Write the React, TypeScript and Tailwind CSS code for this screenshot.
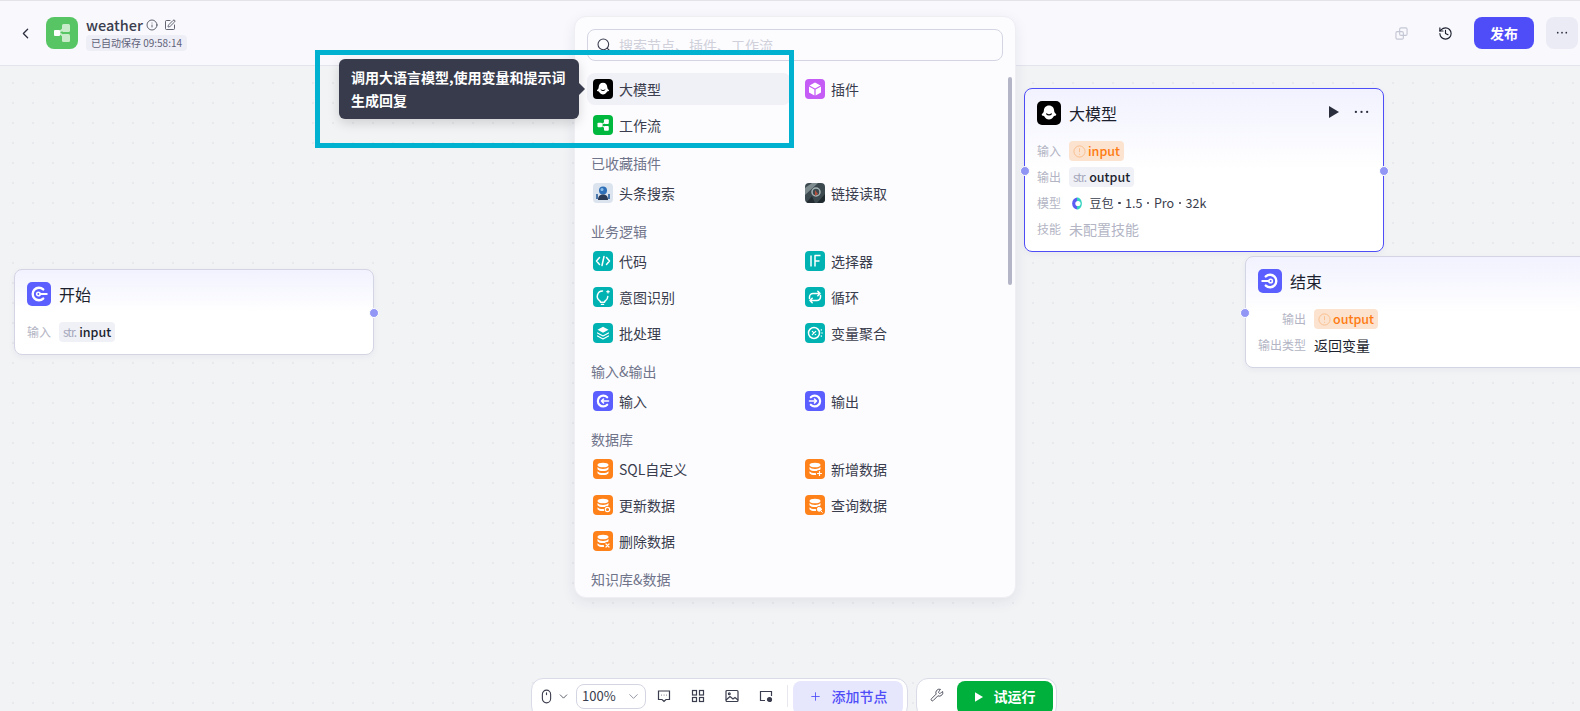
import type { ReactNode } from 'react';
import { ChevronDown, ChevronLeft, History, Info, Plus, Search, SquarePen, Wrench } from 'lucide-react';

const FONT = 'font-["Noto_Sans_CJK_SC","Noto_Sans",sans-serif]';

function Tile({ bg, size = 20, children }: { bg: string; size?: number; children: ReactNode }) {
  return (
    <span className={`shrink-0 overflow-hidden ${size === 20 ? 'size-5 rounded-[4px]' : 'size-6 rounded-[5px]'} ${bg}`}>
      <svg viewBox="0 0 20 20" className="size-full" fill="none" stroke="#fff" strokeWidth="1.5" strokeLinecap="round" strokeLinejoin="round">
        {children}
      </svg>
    </span>
  );
}

const Ghost = (
  <g stroke="none">
    <path d="M10 3.800c-2.700 0-4.200 2-4.300 4.400-.1 1.100-.5 1.800-1.300 2.500-.8.700-.5 1.600.7 1.500.5 0 .8.300 1.100.8.800 1.400 2.200 2.500 3.800 2.500s3-1.100 3.800-2.500c.3-.5.600-.8 1.100-.8 1.200.1 1.500-.8.700-1.500-.8-.7-1.200-1.400-1.300-2.500-.1-2.400-1.600-4.400-4.300-4.400z" fill="#fff" />
    <path d="M8 10.800c1 1.100 3 1.100 4 0" stroke="#000" strokeWidth="1" fill="none" />
  </g>
);

const Flow = (
  <g stroke="none" fill="#fff">
    <rect x="4.500" y="7.800" width="4.500" height="4.500" rx=".8" />
    <rect x="11" y="4.300" width="4.800" height="4.800" rx="1" />
    <rect x="11" y="10.900" width="4.800" height="4.800" rx="1" />
    <path d="M8 9.400l4-3v1.400l-4 3zM8 9.200l4 3v1.400l-4-3z" />
  </g>
);

const Cube = (
  <g stroke="none" fill="#fff">
    <path d="M10 3.600l5.500 3-5.500 3-5.500-3z" />
    <path d="M4 7.600l5.400 3v6l-5.400-3zM16 7.600l-5.400 3v6l5.400-3z" />
  </g>
);

const StartGlyph = (
  <>
    <path d="M13.500 6.200A5.200 5.200 0 1 0 13.500 13.800" strokeWidth="2" />
    <circle cx="9.500" cy="10" r="1.500" strokeWidth="1.300" />
    <path d="M11 10H16.500" strokeWidth="1.600" />
  </>
);

const EndGlyph = (
  <>
    <path d="M6.500 6.200A5.200 5.200 0 1 1 6.500 13.800" strokeWidth="2" />
    <circle cx="10.500" cy="10" r="1.500" strokeWidth="1.300" />
    <path d="M9 10H3.500" strokeWidth="1.600" />
  </>
);

function Db({ extra }: { extra?: ReactNode }) {
  return (
    <>
      <g stroke="none" fill="#fff">
        <ellipse cx="10" cy="6" rx="5.500" ry="2.300" />
        <path d="M4.500 8c1 1.300 3 1.900 5.500 1.900S14.500 9.300 15.500 8v2.200c-1 1.300-3 1.900-5.500 1.900s-4.500-.6-5.500-1.900z" />
        <path d="M4.500 12.200c1 1.300 3 1.900 5.500 1.900s4.500-.6 5.500-1.900v2c-1 1.300-3 1.900-5.500 1.900s-4.500-.6-5.500-1.900z" />
      </g>
      {extra}
    </>
  );
}

const dbBadge = <circle cx="14.500" cy="14.500" r="3.600" fill="#ff811a" stroke="none" />;

const teal = 'bg-[#00b2b2]';
const blue = 'bg-[#5b5fff]';
const orange = 'bg-[#ff811a]';

const icons: Record<string, ReactNode> = {
  大模型: <Tile bg="bg-black">{Ghost}</Tile>,
  插件: <Tile bg="bg-[#c45cf5]">{Cube}</Tile>,
  工作流: <Tile bg="bg-[#00b83e]">{Flow}</Tile>,
  头条搜索: (
    <span className="size-5 shrink-0 overflow-hidden rounded-[4px]">
      <svg viewBox="0 0 20 20" className="size-full">
        <rect width="20" height="20" fill="#dbe4ee" />
        <circle cx="10" cy="7.500" r="4" fill="#2f6fb8" />
        <circle cx="9" cy="6.500" r="1.500" fill="#8fc0ea" />
        <path d="M5 17c0-4 2-5.500 5-5.500s5 1.500 5 5.500z" fill="#2b3a55" />
        <rect x="3" y="11" width="2" height="5" fill="#4b79ad" />
        <rect x="15" y="11" width="2" height="5" fill="#4b79ad" />
      </svg>
    </span>
  ),
  链接读取: (
    <span className="size-5 shrink-0 overflow-hidden rounded-[4px]">
      <svg viewBox="0 0 20 20" className="size-full">
        <rect width="20" height="20" fill="#3c4a50" />
        <path d="M0 5l7-5h6L0 12z" fill="#7e8c90" />
        <path d="M12 20l8-9v9z" fill="#1f2a2f" />
        <circle cx="11" cy="9" r="4" fill="none" stroke="#a7b4b5" strokeWidth="1.500" />
        <path d="M10 7l3 4-3 2z" fill="#b5503e" />
        <path d="M1 20l6-7 3 7z" fill="#232c30" />
      </svg>
    </span>
  ),
  代码: (
    <Tile bg={teal}>
      <path d="M6.500 6.500L3.500 10l3 3.500M13.500 6.500l3 3.500-3 3.500M11 5.500l-2 9" />
    </Tile>
  ),
  选择器: (
    <Tile bg={teal}>
      <path d="M6 4.500v11M10 15.500v-11h5.500M10 10h4.500" strokeLinecap="butt" />
    </Tile>
  ),
  意图识别: (
    <Tile bg={teal}>
      <path d="M9.500 4a5.300 5.300 0 0 0-3 9.600c.6.500 1 1.100 1 1.600h4c0-.5.400-1.100 1-1.600a5.300 5.300 0 0 0 2.300-4.100" />
      <path d="M8.300 17.300h2.400M15 3.500v2.500M13.800 4.700h2.400" strokeWidth="1.200" />
    </Tile>
  ),
  循环: (
    <Tile bg={teal}>
      <path d="M4.500 11.500V10A3.500 3.500 0 0 1 8 6.500h7M12.800 4.300l2.200 2.200-2.200 2.200M15.500 8.500V10a3.500 3.500 0 0 1-3.500 3.500H5M7.200 15.700L5 13.500l2.200-2.200" />
    </Tile>
  ),
  批处理: (
    <Tile bg={teal}>
      <path d="M10 3.800l5.500 3-5.500 3-5.500-3z" fill="#fff" stroke="none" />
      <path d="M4.500 10l5.500 3 5.500-3M4.500 13l5.500 3 5.500-3" strokeWidth="1.200" />
    </Tile>
  ),
  变量聚合: (
    <Tile bg={teal}>
      <circle cx="9" cy="10" r="5.500" />
      <path d="M7.300 8.300l3.400 3.400M10.700 8.300l-3.400 3.400" strokeWidth="1.200" />
      <path d="M16.300 6.500v.8M17 9.600v.8M16.300 12.700v.8" strokeWidth="1" />
    </Tile>
  ),
  输入: (
    <Tile bg={blue}>
      <path d="M14.200 6.300a5.400 5.400 0 1 0 0 7.400" strokeWidth="2.200" />
      <path d="M15.500 10H8.500M10.500 8l-2 2 2 2" strokeWidth="1.600" />
    </Tile>
  ),
  输出: (
    <Tile bg={blue}>
      <path d="M5.800 6.300a5.400 5.400 0 1 1 0 7.400" strokeWidth="2.200" />
      <path d="M4.500 10h7M9.500 8l2 2-2 2" strokeWidth="1.600" />
    </Tile>
  ),
  SQL自定义: (
    <Tile bg={orange}>
      <Db />
    </Tile>
  ),
  新增数据: (
    <Tile bg={orange}>
      <Db
        extra={
          <>
            {dbBadge}
            <path d="M14.500 12.500v4M12.500 14.500h4" strokeWidth="1.200" />
          </>
        }
      />
    </Tile>
  ),
  更新数据: (
    <Tile bg={orange}>
      <Db
        extra={
          <>
            {dbBadge}
            <circle cx="14.500" cy="14.500" r="2.200" strokeWidth="1.200" />
          </>
        }
      />
    </Tile>
  ),
  查询数据: (
    <Tile bg={orange}>
      <Db
        extra={
          <>
            {dbBadge}
            <circle cx="14.300" cy="14.300" r="2" fill="#fff" strokeWidth="1" />
            <path d="M16 16l1.300 1.300" strokeWidth="1" />
          </>
        }
      />
    </Tile>
  ),
  删除数据: (
    <Tile bg={orange}>
      <Db
        extra={
          <>
            {dbBadge}
            <path d="M13 13l3 3M16 13l-3 3" strokeWidth="1.200" />
          </>
        }
      />
    </Tile>
  ),
};

function Item({ name, active }: { name: string; active?: boolean }) {
  return (
    <div className={`flex h-8 items-center gap-1.5 rounded-lg px-1.5 text-sm text-[#3a3d4d] ${active ? 'bg-[#f0f0f7]' : ''}`}>
      {icons[name]}
      <span>{name}</span>
    </div>
  );
}

function Section({ title, items }: { title?: string; items: string[] }) {
  return (
    <div>
      {title && <div className="mb-[3px] flex h-[22px] items-center pl-1 text-sm text-[#70748a]">{title}</div>}
      <div className="grid grid-cols-2 gap-x-2 gap-y-1">
        {items.map((name, i) => (
          <Item key={name} name={name} active={name === '大模型' && i === 0} />
        ))}
      </div>
    </div>
  );
}

function Handle({ className }: { className: string }) {
  return <span className={`absolute size-[10px] rounded-full border border-white bg-[#9297f5] ${className}`} />;
}

function StrTag({ name }: { name: string }) {
  return (
    <span className="flex h-5 items-center gap-[3px] rounded-[4px] bg-[#f0f0f7] px-1 text-[12.5px] leading-none font-medium text-[#1c1f2e]">
      <span className="text-[12px] font-normal tracking-[-1px] text-[#a5a8bb]">str.</span>
      {name}
    </span>
  );
}

function WarnTag({ name }: { name: string }) {
  return (
    <span className="flex h-5 items-center gap-[2px] rounded-[4px] bg-[#fbe3cf] px-1 text-[12.5px] leading-none font-medium text-[#ff7a10]">
      <svg viewBox="0 0 14 14" className="size-[13px]" fill="none" stroke="#f9bd8d" strokeWidth="1">
        <circle cx="7" cy="7" r="6" />
        <path d="M7 3.500v4.200M7 9.500v1" />
      </svg>
      {name}
    </span>
  );
}

function NodeCard({ className, icon, title, actions, children }: { className: string; icon: ReactNode; title: string; actions?: ReactNode; children: ReactNode }) {
  return (
    <div className={`absolute rounded-lg bg-linear-to-b from-[#f1f2fe] to-white to-50% px-3 pt-3 pb-3 shadow-[0_2px_6px_rgba(30,35,80,0.05)] ${className}`}>
      <div className="flex h-6 items-center gap-2">
        {icon}
        <span className="flex-1 text-base leading-6 text-[#1c1f2e]">{title}</span>
        {actions}
      </div>
      <div className="mt-4 flex flex-col gap-[6px]">{children}</div>
    </div>
  );
}

function Row({ label, children, wide }: { label: string; children: ReactNode; wide?: boolean }) {
  return (
    <div className="flex h-5 items-center gap-2">
      <span className={`text-xs text-[#b3b5c4] ${wide ? 'w-12 text-right' : 'w-6'}`}>{label}</span>
      {children}
    </div>
  );
}

function Dot() {
  return <span className="size-[2.5px] rounded-full bg-[#3a3d4d]" />;
}

export default function App() {
  return (
    <div className={`relative flex h-[711px] w-[1580px] flex-col overflow-hidden ${FONT}`}>
      {/* Top bar */}
      <header className="flex h-[66px] shrink-0 items-center border-y border-t-[#e4e4e8] border-b-[#e3e4ec] bg-[#f8f8fd] pr-[2px] pl-[17px]">
        <ChevronLeft className="size-[17px] text-[#2b2e3d]" strokeWidth={1.8} />
        <span className="mr-2 ml-3">
          <span className="flex size-8 items-center justify-center rounded-lg bg-[#58c565]">
            <svg viewBox="0 0 32 32" className="size-8">
              <path d="M12 15l6-5v2.500l-6 5zM12 16l6 5v-2.500l-6-5z" fill="#c8ecc9" />
              <rect x="16" y="7" width="8" height="8" rx="1.500" fill="#c8ecc9" />
              <rect x="16" y="17" width="8" height="8" rx="1.500" fill="#c8ecc9" />
              <rect x="8" y="13" width="6" height="6" rx="1" fill="#fff" />
            </svg>
          </span>
        </span>
        <div className="flex flex-col gap-[1px]">
          <div className="flex h-[18px] items-center">
            <span className="w-[55px] text-[14.5px] font-medium whitespace-nowrap text-[#3a3d4d]">weather</span>
            <Info className="ml-[5px] size-3 text-[#3a3d4d]" strokeWidth={1.6} />
            <SquarePen className="ml-[6px] size-3 text-[#3a3d4d]" strokeWidth={1.6} />
          </div>
          <span className="flex h-4 w-[101px] items-center justify-center rounded-[4px] bg-[#eeeef7] text-[10px] text-[#5f6278]">已自动保存 09:58:14</span>
        </div>
        <div className="flex-1" />
        <svg viewBox="0 0 14 14" className="mr-[30px] size-[13px]" fill="none" stroke="#c4c6d4" strokeWidth="1.200">
          <rect x="1" y="5" width="8" height="8" rx="1.500" />
          <rect x="5" y="1" width="8" height="8" rx="1.500" />
        </svg>
        <History className="mr-[21px] size-[15px] text-[#1c1f2e]" strokeWidth={1.8} />
        <button type="button" className="mr-3 h-8 w-[60px] rounded-lg bg-[#4f4df7] text-sm font-bold text-white">
          发布
        </button>
        <button type="button" className="flex h-8 w-8 items-center justify-center rounded-lg bg-[#ebebf5] text-[#2b2e3d]">
          <svg viewBox="0 0 14 4" className="w-3">
            <circle cx="2" cy="2" r="1" fill="currentColor" />
            <circle cx="7" cy="2" r="1" fill="currentColor" />
            <circle cx="12" cy="2" r="1" fill="currentColor" />
          </svg>
        </button>
      </header>

      {/* Canvas */}
      <div className="flex-1 bg-[#f2f3f5] bg-[radial-gradient(circle,#e8e9ed_1px,transparent_1px)] bg-[size:20px_20px] bg-[position:3px_7px]" />

      <NodeCard
        className="top-[269px] left-[14px] h-[86px] w-[360px] border border-[#d3d4e4]"
        icon={<Tile bg={blue} size={24}>{StartGlyph}</Tile>}
        title="开始"
      >
        <Row label="输入">
          <StrTag name="input" />
        </Row>
      </NodeCard>
      <Handle className="top-[308px] left-[369px]" />

      <NodeCard
        className="top-[88px] left-[1024px] h-[164px] w-[360px] border border-[#4f4df7]"
        icon={<Tile bg="bg-black" size={24}>{Ghost}</Tile>}
        title="大模型"
        actions={
          <div className="mr-[2px] flex items-center gap-[15px] pb-[3px]">
            <svg viewBox="0 0 10 12" className="h-3 w-[10px]">
              <path d="M0 0l10 6-10 6z" fill="#2b2e3d" />
            </svg>
            <svg viewBox="0 0 16 4" className="w-[15px]">
              <circle cx="2" cy="2" r="1.200" fill="#2b2e3d" />
              <circle cx="8" cy="2" r="1.200" fill="#2b2e3d" />
              <circle cx="14" cy="2" r="1.200" fill="#2b2e3d" />
            </svg>
          </div>
        }
      >
        <Row label="输入">
          <WarnTag name="input" />
        </Row>
        <Row label="输出">
          <StrTag name="output" />
        </Row>
        <Row label="模型">
          <span className="flex items-center gap-[4.5px] pl-[2px] text-[12.5px] text-[#3a3d4d]">
            <svg viewBox="0 0 12 14" className="mr-[2px] h-[13px] w-[12px]">
              <path d="M6 .5C2.800 1 .8 3.500.8 7S2.800 13 6 13.500z" fill="#5a5cf2" />
              <path d="M6 .5c3 0 5.200 2.800 5.200 6.500S9 13.500 6 13.500z" fill="#35d3c0" />
              <circle cx="7" cy="7" r="2.800" fill="#fff" />
            </svg>
            <span className="text-xs">豆包</span>
            <Dot />
            <span>1.5</span>
            <Dot />
            <span>Pro</span>
            <Dot />
            <span>32k</span>
          </span>
        </Row>
        <Row label="技能">
          <span className="text-sm text-[#b3b5c4]">未配置技能</span>
        </Row>
      </NodeCard>
      <Handle className="top-[166px] left-[1020px]" />
      <Handle className="top-[166px] left-[1379px]" />

      <NodeCard
        className="top-[256px] left-[1245px] h-[112px] w-[400px] border border-[#d3d4e4]"
        icon={<Tile bg={blue} size={24}>{EndGlyph}</Tile>}
        title="结束"
      >
        <Row label="输出" wide>
          <WarnTag name="output" />
        </Row>
        <Row label="输出类型" wide>
          <span className="text-sm text-[#1c1f2e]">返回变量</span>
        </Row>
      </NodeCard>
      <Handle className="top-[308px] left-[1240px]" />

      {/* Add node popover */}
      <div className="absolute top-[16px] left-[574px] flex h-[582px] w-[442px] flex-col rounded-xl border border-[#eeeef3] bg-[#fcfcff] px-3 pt-3 pb-1 shadow-[0_4px_14px_rgba(30,35,80,0.08)]">
        <div className="flex h-8 shrink-0 items-center gap-[7px] rounded-lg border border-[#d4d5e3] pl-2">
          <Search className="size-4 text-[#3a3d4d]" strokeWidth={1.6} />
          <span className="text-sm text-[#cfd0da]">搜索节点、插件、工作流</span>
        </div>
        <div className="mt-3 flex flex-col gap-[11px] overflow-hidden">
          <Section items={['大模型', '插件', '工作流']} />
          <Section title="已收藏插件" items={['头条搜索', '链接读取']} />
          <Section title="业务逻辑" items={['代码', '选择器', '意图识别', '循环', '批处理', '变量聚合']} />
          <Section title="输入&输出" items={['输入', '输出']} />
          <Section title="数据库" items={['SQL自定义', '新增数据', '更新数据', '查询数据', '删除数据']} />
          <Section title="知识库&数据" items={[]} />
        </div>
        <span className="absolute top-[60px] right-[3px] h-[208px] w-1 rounded-full bg-[#b4b6c8]" />
      </div>

      {/* Tooltip */}
      <div className="absolute top-[59px] left-[339px] flex h-[60px] w-[240px] items-center rounded-md bg-[#373b4b] px-3 text-sm leading-[23px] font-bold text-white shadow-[0_4px_12px_rgba(0,0,0,0.15)]">
        调用大语言模型,使用变量和提示词生成回复
      </div>
      <span className="absolute top-[83px] left-[579px] size-0 border-y-[6px] border-l-[6px] border-y-transparent border-l-[#373b4b]" />

      {/* Annotation frame */}
      <div className="pointer-events-none absolute top-[50px] left-[315px] h-[98px] w-[479px] border-[5px] border-[#00b2d0]" />

      {/* Bottom toolbar */}
      <div className="absolute top-[678px] left-[531px] flex gap-2 text-[#3a3d4d]">
        <div className="flex h-[40px] w-[377px] items-start rounded-xl border border-[#d9dbe8] bg-white pt-[2px] pr-[3px] pl-[9px]">
          <div className="flex h-[30px] items-center">
            <svg viewBox="0 0 12 16" className="h-[15px] w-[11px]" fill="none" stroke="#3a3d4d" strokeWidth="1.200">
              <rect x="1.500" y="1" width="9" height="14" rx="4.500" />
              <path d="M6 3.500v3" />
            </svg>
            <ChevronDown className="ml-[5px] size-[13px]" strokeWidth={1.5} />
            <div className="ml-[6px] flex h-[25px] w-[70px] items-center justify-between rounded-lg border border-[#d4d5e3] pr-[4px] pl-[5px] text-[13px]">
              100%
              <ChevronDown className="size-[15px] text-[#8d90a3]" strokeWidth={1.5} />
            </div>
            <svg viewBox="0 0 14 14" className="ml-[11px] size-[14px]" fill="none" stroke="#3a3d4d" strokeWidth="1.200">
              <path d="M1.500 2h11v8.500H9L7 12.500 5 10.500H1.500z" />
              <path d="M4.300 6.200h.5M6.800 6.200h.5M9.300 6.200h.5" />
            </svg>
            <svg viewBox="0 0 14 14" className="ml-5 size-[14px]" fill="none" stroke="#3a3d4d" strokeWidth="1.200">
              <rect x="1.500" y="1.500" width="4" height="4.500" />
              <rect x="8.500" y="1.500" width="4" height="4.500" />
              <rect x="1.500" y="8.500" width="4" height="4" />
              <rect x="8.500" y="8.500" width="4" height="4" />
            </svg>
            <svg viewBox="0 0 14 14" className="ml-5 size-[14px]" fill="none" stroke="#3a3d4d" strokeWidth="1.200">
              <rect x="1" y="1.500" width="12" height="11" rx="1" />
              <circle cx="4.300" cy="4.800" r=".9" />
              <path d="M1 11l4-3.500 3 2.500 2-1.500 3 2.500" />
            </svg>
            <svg viewBox="0 0 14 14" className="ml-5 size-[14px]" fill="none" stroke="#3a3d4d" strokeWidth="1.200">
              <path d="M6 11.500H1.500v-9h11V7" />
              <circle cx="10.500" cy="10.500" r="2" fill="#3a3d4d" />
            </svg>
            <span className="ml-[14px] h-[22px] w-px bg-[#e6e7ef]" />
          </div>
          <button type="button" className="ml-[5px] flex h-[34px] w-[110px] items-start justify-center gap-[10px] rounded-lg bg-[#e6e7fd] pt-[5px] text-sm font-medium text-[#4f4df7]">
            <Plus className="mt-[4px] size-[13px]" strokeWidth={1.6} />
            添加节点
          </button>
        </div>
        <div className="flex h-[40px] w-[141px] items-start rounded-xl border border-[#d9dbe8] bg-white pt-[2px] pr-[3px] pl-[13px]">
          <Wrench className="mt-[7px] size-[14px]" strokeWidth={1.5} />
          <button type="button" className="ml-[13px] flex h-[34px] w-[96px] items-start justify-center gap-[11px] rounded-lg bg-[#00b03c] pt-[5px] text-sm font-bold text-white">
            <svg viewBox="0 0 10 12" className="mt-[6px] h-[10px] w-[8px]">
              <path d="M0 0l10 6-10 6z" fill="#fff" />
            </svg>
            试运行
          </button>
        </div>
      </div>
    </div>
  );
}
